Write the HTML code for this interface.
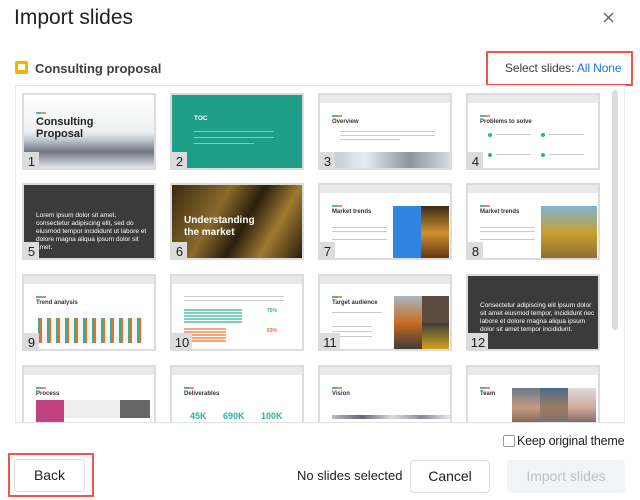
<!DOCTYPE html>
<html><head><style>
*{box-sizing:border-box;margin:0;padding:0}
body{width:640px;height:500px;background:#fff;font-family:"Liberation Sans",Arial,sans-serif;position:relative;overflow:hidden;color:#202124}
.a{position:absolute}
.t{position:absolute;width:134px;height:77px;border:2px solid #dcdcdc;background:#fff;overflow:hidden}
.n{position:absolute;left:0;bottom:0;width:15px;height:18px;background:#dcdcdc;font-size:13px;line-height:19px;text-align:center;color:#202124}
.n2{width:20px}
.bar{position:absolute;left:0;top:0;right:0;height:8px;background:#e8eaea}
.acc{position:absolute;width:10px;height:2px;background:linear-gradient(90deg,#4db6a8 50%,#f08a5d 50%)}
.h{position:absolute;font-size:6px;font-weight:bold;color:#333}
.ln{position:absolute;height:1px;background:#ccc}
.w{position:absolute;color:#fff;font-size:6.5px;line-height:8px}
</style></head><body>
<div class="a" style="left:14px;top:6px;font-size:21px;color:#202124">Import slides</div>
<svg class="a" style="left:603px;top:12px" width="11" height="11" viewBox="0 0 11 11"><path d="M1 1L10 10M10 1L1 10" stroke="#5f6368" stroke-width="1.4"/></svg>
<div class="a" style="left:15px;top:61px;width:13px;height:13px;background:#f4b400;border-radius:2px"><div style="position:absolute;left:3px;top:3px;width:7px;height:6px;background:#fff"></div></div>
<div class="a" style="left:35px;top:61px;font-size:13px;font-weight:bold;color:#3c4043">Consulting proposal</div>
<div class="a" style="left:486px;top:51px;width:147px;height:35px;border:2px solid #f1554c"></div>
<div class="a" style="left:505px;top:61px;font-size:12px;letter-spacing:-0.1px;color:#3c4043">Select slides: <span style="color:#1a73e8">All None</span></div>
<div class="a" style="left:15px;top:85px;width:610px;height:338px;border:1px solid #e8e8e8;border-bottom:1px solid #e0e0e0"></div>
<div class="a" style="left:612px;top:90px;width:6px;height:240px;background:#dadce0;border-radius:3px"></div>

<!-- row1 -->
<div class="t" style="left:22px;top:93px;background:linear-gradient(#fff 0,#eef0f1 50%,#c9ced3 60%,#6f7683 78%,#e6e8ea 100%)">
<div class="acc" style="left:12px;top:17px"></div>
<div class="h" style="left:12px;top:21px;font-size:11px;line-height:12px;color:#222">Consulting<br>Proposal</div></div>
<div class="n" style="left:24px;top:152px">1</div>
<div class="t" style="left:170px;top:93px;background:#1f9e89"><div class="w" style="left:22px;top:20px;font-weight:bold">TOC</div>
<div class="ln" style="left:22px;top:36px;width:80px;background:#7fcdbf"></div><div class="ln" style="left:22px;top:42px;width:80px;background:#7fcdbf"></div><div class="ln" style="left:22px;top:48px;width:60px;background:#7fcdbf"></div></div>
<div class="n" style="left:172px;top:152px">2</div>
<div class="t" style="left:318px;top:93px"><div class="bar"></div><div class="acc" style="left:12px;top:20px"></div><div class="h" style="left:12px;top:24px">Overview</div>
<div class="ln" style="left:20px;top:36px;width:95px"></div><div class="ln" style="left:20px;top:40px;width:95px"></div><div class="ln" style="left:20px;top:44px;width:60px"></div>
<div class="a" style="left:0;top:57px;width:134px;height:20px;background:linear-gradient(90deg,#b9bec4,#e9ecee,#8d949c,#dfe2e5)"></div></div>
<div class="n" style="left:320px;top:152px">3</div>
<div class="t" style="left:466px;top:93px"><div class="bar"></div><div class="acc" style="left:12px;top:20px"></div><div class="h" style="left:12px;top:24px">Problems to solve</div>
<div class="a" style="left:20px;top:38px;width:4px;height:4px;border-radius:50%;background:#2bb39a"></div><div class="a" style="left:73px;top:38px;width:4px;height:4px;border-radius:50%;background:#2bb39a"></div>
<div class="a" style="left:20px;top:58px;width:4px;height:4px;border-radius:50%;background:#2bb39a"></div><div class="a" style="left:73px;top:58px;width:4px;height:4px;border-radius:50%;background:#2bb39a"></div>
<div class="ln" style="left:28px;top:39px;width:35px"></div><div class="ln" style="left:81px;top:39px;width:35px"></div><div class="ln" style="left:28px;top:59px;width:35px"></div><div class="ln" style="left:81px;top:59px;width:35px"></div></div>
<div class="n" style="left:468px;top:152px">4</div>

<!-- row2 -->
<div class="t" style="left:22px;top:183px;background:#3b3b3b"><div class="w" style="left:12px;top:27px;width:115px">Lorem ipsum dolor sit amet, consectetur adipiscing elit, sed do eiusmod tempor incididunt ut labore et dolore magna aliqua ipsum dolor sit amet.</div></div>
<div class="n" style="left:24px;top:242px">5</div>
<div class="t" style="left:170px;top:183px;background:linear-gradient(120deg,#3a2a10,#8a6a2a 35%,#2a1e0c 55%,#a07a30 75%,#2a1e0c)"><div class="w" style="left:12px;top:30px;font-size:10px;line-height:12px;font-weight:bold">Understanding<br>the market</div></div>
<div class="n" style="left:172px;top:242px">6</div>
<div class="t" style="left:318px;top:183px"><div class="bar"></div><div class="acc" style="left:12px;top:20px"></div><div class="h" style="left:12px;top:24px">Market trends</div>
<div class="ln" style="left:12px;top:42px;width:55px"></div><div class="ln" style="left:12px;top:46px;width:55px"></div><div class="ln" style="left:12px;top:54px;width:55px"></div>
<div class="a" style="left:73px;top:21px;width:28px;height:54px;background:#2f86e0"></div><div class="a" style="left:101px;top:21px;width:28px;height:54px;background:linear-gradient(#3a2c18,#d09030,#5a3010)"></div></div>
<div class="n" style="left:320px;top:242px">7</div>
<div class="t" style="left:466px;top:183px"><div class="bar"></div><div class="acc" style="left:12px;top:20px"></div><div class="h" style="left:12px;top:24px">Market trends</div>
<div class="ln" style="left:12px;top:42px;width:55px"></div><div class="ln" style="left:12px;top:46px;width:55px"></div><div class="ln" style="left:12px;top:54px;width:55px"></div>
<div class="a" style="left:73px;top:21px;width:56px;height:54px;background:linear-gradient(#7ab6d0,#c8a030 50%,#8a6a30)"></div></div>
<div class="n" style="left:468px;top:242px">8</div>

<!-- row3 -->
<div class="t" style="left:22px;top:274px"><div class="bar"></div><div class="acc" style="left:12px;top:20px"></div><div class="h" style="left:12px;top:24px">Trend analysis</div>
<div class="a" style="left:14px;top:42px;width:104px;height:25px;background:repeating-linear-gradient(90deg,#2bb39a 0 2px,#f06b2a 2px 4px,#f5f5f5 4px 9px)"></div></div>
<div class="n" style="left:24px;top:333px">9</div>
<div class="t" style="left:170px;top:274px"><div class="bar"></div><div class="ln" style="left:12px;top:20px;width:100px"></div><div class="ln" style="left:12px;top:24px;width:100px"></div>
<div class="a" style="left:12px;top:33px;width:58px;height:14px;background:repeating-linear-gradient(#7ecfbf 0 2px,#fff 2px 3px)"></div>
<div class="a" style="left:12px;top:52px;width:42px;height:14px;background:repeating-linear-gradient(#f5a67a 0 2px,#fff 2px 3px)"></div>
<div class="a" style="left:95px;top:32px;font-size:5px;color:#2bb39a;font-weight:bold">75%</div><div class="a" style="left:95px;top:52px;font-size:5px;color:#f06b2a;font-weight:bold">63%</div></div>
<div class="n n2" style="left:172px;top:333px">10</div>
<div class="t" style="left:318px;top:274px"><div class="bar"></div><div class="acc" style="left:12px;top:20px"></div><div class="h" style="left:12px;top:24px">Target audience</div>
<div class="ln" style="left:12px;top:36px;width:50px"></div><div class="ln" style="left:12px;top:50px;width:40px"></div><div class="ln" style="left:12px;top:55px;width:40px"></div><div class="ln" style="left:12px;top:60px;width:40px"></div>
<div class="a" style="left:74px;top:20px;width:28px;height:54px;background:linear-gradient(#a9b8c0,#c86a20 50%,#3a3a3a)"></div><div class="a" style="left:102px;top:20px;width:27px;height:27px;background:#5a4a40"></div><div class="a" style="left:102px;top:47px;width:27px;height:27px;background:linear-gradient(#3a3a3a,#d8a820)"></div></div>
<div class="n n2" style="left:320px;top:333px">11</div>
<div class="t" style="left:466px;top:274px;background:#3b3b3b"><div class="w" style="left:12px;top:26px;width:115px">Consectetur adipiscing elit ipsum dolor sit amet eiusmod tempor, incididunt nec labore et dolore magna aliqua ipsum dolor sit amet tempor incididunt.</div></div>
<div class="n n2" style="left:468px;top:333px">12</div>

<!-- row4 (clipped) -->
<div class="a" style="left:0;top:364px;width:640px;height:58px;overflow:hidden">
<div class="t" style="left:22px;top:1px"><div class="bar"></div><div class="acc" style="left:12px;top:20px"></div><div class="h" style="left:12px;top:24px">Process</div>
<div class="a" style="left:12px;top:33px;width:28px;height:44px;background:#c04080"></div><div class="a" style="left:96px;top:33px;width:30px;height:18px;background:#666"></div><div class="a" style="left:40px;top:33px;width:56px;height:18px;background:#eee"></div></div>
<div class="t" style="left:170px;top:1px"><div class="bar"></div><div class="acc" style="left:12px;top:20px"></div><div class="h" style="left:12px;top:24px">Deliverables</div>
<div class="a" style="left:18px;top:44px;font-size:9px;color:#2bb39a;font-weight:bold;width:110px;word-spacing:14px">45K 690K 100K</div></div>
<div class="t" style="left:318px;top:1px"><div class="bar"></div><div class="acc" style="left:12px;top:20px"></div><div class="h" style="left:12px;top:24px">Vision</div>
<div class="a" style="left:12px;top:48px;width:120px;height:4px;background:linear-gradient(90deg,#bbb,#667,#ddd,#889,#eee)"></div></div>
<div class="t" style="left:466px;top:1px"><div class="bar"></div><div class="acc" style="left:12px;top:20px"></div><div class="h" style="left:12px;top:24px">Team</div>
<div class="a" style="left:44px;top:21px;width:28px;height:50px;background:linear-gradient(#6a7a8a,#c89a80 40%,#333)"></div><div class="a" style="left:72px;top:21px;width:28px;height:50px;background:linear-gradient(#4a6a8a,#a07a60 40%,#4a6a90)"></div><div class="a" style="left:100px;top:21px;width:28px;height:50px;background:linear-gradient(#ddd,#d0a898 40%,#2a2a3a)"></div></div>
</div>

<div class="a" style="left:503px;top:435px;width:12px;height:12px;border:1px solid #999;border-radius:2px"></div>
<div class="a" style="left:517px;top:434px;font-size:12.5px;letter-spacing:-0.2px;color:#202124">Keep original theme</div>
<div class="a" style="left:8px;top:453px;width:86px;height:44px;border:2px solid #f1554c"></div>
<div class="a" style="left:14px;top:459px;width:71px;height:33px;border:1px solid #dadce0;border-radius:4px;font-size:14px;line-height:31px;text-align:center">Back</div>
<div class="a" style="left:297px;top:468px;font-size:13px;color:#202124">No slides selected</div>
<div class="a" style="left:410px;top:460px;width:80px;height:33px;border:1px solid #dadce0;border-radius:4px;font-size:14px;line-height:31px;text-align:center">Cancel</div>
<div class="a" style="left:507px;top:460px;width:118px;height:33px;background:#f1f3f4;border-radius:4px;font-size:14px;line-height:33px;text-align:center;color:#bdc1c6">Import slides</div>
</body></html>
